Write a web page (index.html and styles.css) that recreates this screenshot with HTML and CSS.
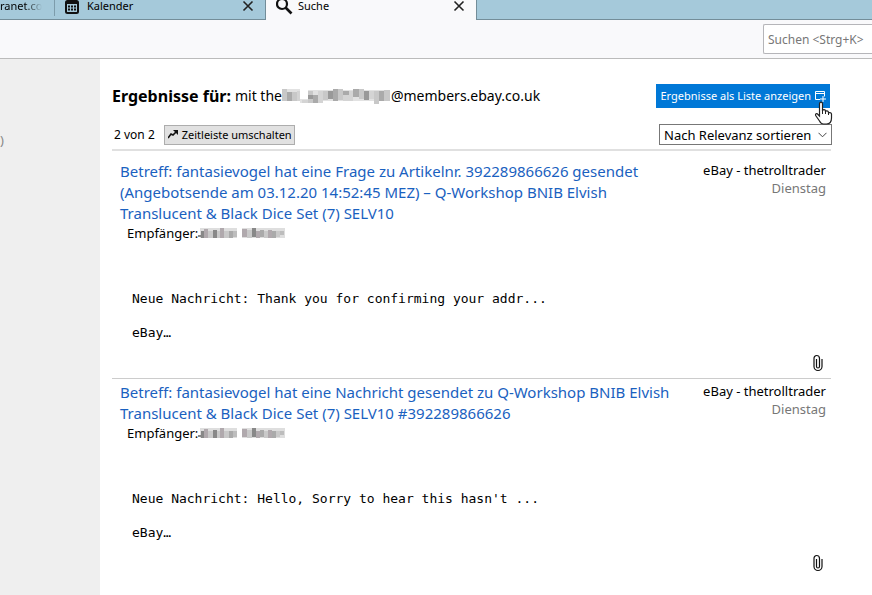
FILE: index.html
```html
<!DOCTYPE html>
<html lang="de">
<head>
<meta charset="utf-8">
<title>Suche</title>
<link rel="stylesheet" href="styles.css">
</head>
<body>
<svg class="defs" aria-hidden="true">
  <symbol id="close" viewBox="0 0 12 12"><path d="M1.5 1.5l9 9M10.5 1.5l-9 9" fill="none" stroke="#222" stroke-width="1.6"/></symbol>
  <symbol id="clip" viewBox="0 0 10 18"><path d="M3.5 5v7.5a1.5 1.5 0 0 0 3 0V4.5C6.500 0.500 1 0.500 1 4.500v8a4 4 0 0 0 8 0V5" fill="none" stroke="#111" stroke-width="1.2"/></symbol>
  <symbol id="name" viewBox="0 0 88 12">
    <path d="M2 1h37v10H2zM44 1h43v10H44z" fill="#dedede"/>
    <g fill="#888"><path d="M0 8h3V4h3v7H3v-1H0zM15 3h4v8h-4zM54 1h4v9h-4z"/></g>
    <g fill="#b0a9ad"><path d="M6 2h4v9H6zM22 1h4v10h-4zM44 2h5v8h-5zM58 4h4v7h-4zM70 3h4v8h-4z"/></g>
    <g fill="#c9c9c9"><path d="M10 4h5v7h-5zM19 4h3v7h-3zM26 4h5v7h-5zM49 3h5v8h-5zM66 4h4v7h-4zM78 4h4v6h-4z"/></g>
    <g fill="#aaa"><path d="M31 4h4v7h-4zM62 3h4v7h-4zM74 4h4v7h-4z"/></g>
    <g fill="#bdbdbd"><path d="M35 4h4v6h-4zM82 4h4v4h-4z"/></g>
  </symbol>
</svg>
<nav class="tabs">
  <button class="tab tab-first"><span>ranet.co</span></button>
  <button class="tab tab-calendar">
    <svg width="14" height="16" viewBox="0 0 14 16"><rect x="1" y="3" width="12" height="12" rx="1.500" fill="none" stroke="#111" stroke-width="2"/><path d="M1 5h12M4 0v4M10 0v4" stroke="#111" stroke-width="2"/><path d="M3 8.500h2m1 0h2m1 0h2M3 11.500h2m1 0h2m1 0h2" stroke="#111" stroke-width="2"/></svg>
    <span>Kalender</span>
    <svg class="close" width="12" height="12"><use href="#close"/></svg>
  </button>
  <button class="tab tab-active">
    <svg width="18" height="18" viewBox="0 0 18 18"><circle cx="6" cy="7" r="5" fill="none" stroke="#111" stroke-width="2.200"/><path d="M9.500 10.500l6 6" stroke="#111" stroke-width="2.600"/></svg>
    <span>Suche</span>
    <svg class="close" width="12" height="12"><use href="#close"/></svg>
  </button>
  <div class="tab-rest"></div>
</nav>
<header class="toolbar"><input class="search" type="text" aria-label="Suchen" placeholder="Suchen &lt;Strg+K&gt;"></header>
<div class="page">
  <aside class="sidebar">)</aside>
  <main class="results">
    <div class="heading">
      <h1>Ergebnisse für:</h1>
      <p class="query"><span>mit the</span><svg width="109" height="18" viewBox="0 0 109 18" aria-hidden="true">
        <path d="M0 2h18v12H0zM18 12h9v4h-9zM26 3h82v11H26z" fill="#e2e2e2"/>
        <g fill="#c8c8c8"><path d="M0 2h5v12H0zM10 5h5v9h-5zM26 4h5v12h-5zM41 4h5v9h-5zM56 2h5v11h-5zM77 2h5v10h-5zM92 4h5v13h-5zM102 3h6v11h-6z"/></g>
        <g fill="#aaa"><path d="M5 5h5v9H5zM31 8h5v8h-5zM51 2h5v12h-5zM61 4h6v4h-6zM71 2h6v8h-6zM97 4h5v10h-5z"/></g>
        <g fill="#d4d4d4"><path d="M15 4h3v10h-3zM20 13h6v3h-6zM36 4h5v12h-5zM67 4h4v10h-4zM87 4h5v8h-5zM61 8h6v6h-6z"/></g>
        <g fill="#999"><path d="M46 4h5v8h-5zM82 4h5v9h-5zM26 8h5v4h-5z"/></g>
      </svg><span>@members.ebay.co.uk</span></p>
      <button class="as-list"><span>Ergebnisse als Liste anzeigen</span>
        <svg width="12" height="12" viewBox="0 0 12 12" fill="none" stroke="#fff"><path d="M6 9.500H1.500v-8h9v5M1 3.500h10M9 6v6M6 9h6"/></svg>
        <svg class="pointer" width="19" height="24" viewBox="0 0 19 24"><path d="M5.500 15V3c0-2.500 3-2.500 3 0v7c0-2 3-1.500 3 0v1c0-1.700 3-1.300 3 .5v1c0-1.500 3-1 3 .5v4c0 4-2 6-5 6h-3c-2 0-3-1-4-3l-3.500-5c-1.500-2.500 1-3 2-1.500z" fill="#fff" stroke="#222" stroke-width="1.200"/><path d="M8.500 9v4M11.500 10v3M14.500 11v3" stroke="#222"/></svg>
      </button>
    </div>
    <div class="controls">
      <span>2 von 2</span>
      <button class="timeline"><svg width="10" height="9" viewBox="0 0 10 9"><path d="M0 8l3-4 2 1 3-3" fill="none" stroke="#111" stroke-width="1.600"/><path d="M5 0h5v5z" fill="#111"/></svg><span>Zeitleiste umschalten</span></button>
      <div class="sort">
        <select aria-label="Sortierung"><option>Nach Relevanz sortieren</option></select>
        <svg class="chevron" width="9" height="6" viewBox="0 0 9 6"><path d="M.5.8l4 4 4-4" fill="none" stroke="#444"/></svg>
      </div>
    </div>
    <article class="result">
      <div class="summary">
        <a class="subject" href="#">Betreff: fantasievogel hat eine Frage zu Artikelnr. 392289866626 gesendet (Angebotsende am 03.12.20 14:52:45 MEZ) – Q-Workshop BNIB Elvish Translucent &amp; Black Dice Set (7) SELV10</a>
        <div class="sender"><span>eBay - thetrolltrader</span><time>Dienstag</time></div>
      </div>
      <p class="recipient"><span>Empfänger:</span><svg width="88" height="12" aria-hidden="true"><use href="#name"/></svg></p>
      <pre class="message">Neue Nachricht: Thank you for confirming your addr...

eBay…</pre>
      <svg class="clip" width="10" height="18"><use href="#clip"/></svg>
    </article>
    <article class="result">
      <div class="summary">
        <a class="subject" href="#">Betreff: fantasievogel hat eine Nachricht gesendet zu Q-Workshop BNIB Elvish Translucent &amp; Black Dice Set (7) SELV10 #392289866626</a>
        <div class="sender"><span>eBay - thetrolltrader</span><time>Dienstag</time></div>
      </div>
      <p class="recipient"><span>Empfänger:</span><svg width="88" height="12" aria-hidden="true"><use href="#name"/></svg></p>
      <pre class="message">Neue Nachricht: Hello, Sorry to hear this hasn't ...

eBay…</pre>
      <svg class="clip" width="10" height="18"><use href="#clip"/></svg>
    </article>
  </main>
</div>
</body>
</html>
```
FILE: styles.css
```css
* { box-sizing: border-box; }
body { margin: 0; min-height: 100vh; display: flex; flex-direction: column; font: 13px/18px "Noto Sans", "Open Sans", sans-serif; color: #000; background: #fff; }
button, input, select { font: inherit; color: inherit; border-radius: 0; }
h1, p, pre { margin: 0; }
svg { flex: none; display: block; }
.defs { position: absolute; width: 0; height: 0; }

.tabs { display: flex; height: 20px; background: #a5c9da; font-size: 11px; }
.tab { display: flex; align-items: center; gap: 8px; height: 20px; padding: 0 11px 8px 10px; border: 0; border-bottom: 1px solid #738d99; background: none; line-height: 10px; text-align: left; }
.tab-first { width: 55px; padding-left: 0; position: relative; }
.tab-first span { background: linear-gradient(90deg, #000 60%, transparent); background-clip: text; color: transparent; }
.tab-first::after { content: ""; position: absolute; right: 0; top: 0; width: 1px; height: 16px; background: #7d9cab; }
.tab-calendar { width: 211px; border-right: 1px solid #738d99; }
.tab-active { width: 210px; gap: 4px; border-bottom-color: #f9f9fb; background: #f9f9fb; }
.close { margin-left: auto; }
.tab-rest { flex: 1; border: solid #738d99; border-width: 0 0 1px 1px; }

.toolbar { display: flex; justify-content: flex-end; padding: 4px 0; background: #f9f9fb; border-bottom: 1px solid #bbb; }
.search { width: 109px; height: 30px; padding: 0 4px; border: 1px solid #b5b5b9; border-right: 0; border-radius: 2px 0 0 2px; background: #fff; font-size: 12px; }
.search::placeholder { color: #777; }

.page { flex: 1; display: flex; }
.sidebar { width: 100px; flex: none; padding-top: 72px; background: #efefef; color: #888; }
.results { flex: 1; padding: 25px 41px 0 12px; }
.heading { display: flex; align-items: center; height: 24px; gap: 4px; }
h1 { font-size: 16px; line-height: 24px; }
.query { display: flex; align-items: center; font-size: 14px; }
.as-list { position: relative; display: flex; align-items: center; gap: 3px; height: 24px; margin: 0 1px 0 auto; padding: 0 4px; border: 0; background: #0078d7; color: #fff; font-size: 11px; white-space: nowrap; }
.pointer { position: absolute; right: -3px; top: 17px; z-index: 1; }
.controls { display: flex; align-items: center; gap: 9px; margin-top: 16px; padding: 0 0 4px 2px; border-bottom: 2px solid #e0e0e0; font-size: 12px; }
.timeline { display: flex; align-items: center; gap: 4px; height: 20px; padding: 0 2px 0 3px; border: 1px solid #adadad; background: #e1e1e1; font-size: 11px; white-space: nowrap; }
.sort { position: relative; margin: 0 -1px 0 auto; }
.sort select { appearance: none; display: block; width: 173px; height: 21px; padding: 0 4px; border: 1px solid #777; background: #fff; font-size: 13px; }
.chevron { position: absolute; right: 5px; top: 8px; pointer-events: none; }

.result { padding: 3px 5px 6px 8px; border-bottom: 1px solid #ccc; }
.controls + .result { padding-top: 10px; }
.result:last-child { border-bottom: 0; }
.summary { display: flex; justify-content: space-between; gap: 16px; }
.subject { flex: 0 1 560px; font-size: 15px; line-height: 21px; color: #1a61c0; text-decoration: none; }
.sender { display: flex; flex-direction: column; align-items: flex-end; flex: none; white-space: nowrap; }
.sender time { color: #777; }
.recipient { display: flex; align-items: center; padding-left: 7px; }
.message { padding: 48px 12px 13px; font: 13px/17px "DejaVu Sans Mono", monospace; }
.clip { margin: 0 3px 0 auto; }
```
